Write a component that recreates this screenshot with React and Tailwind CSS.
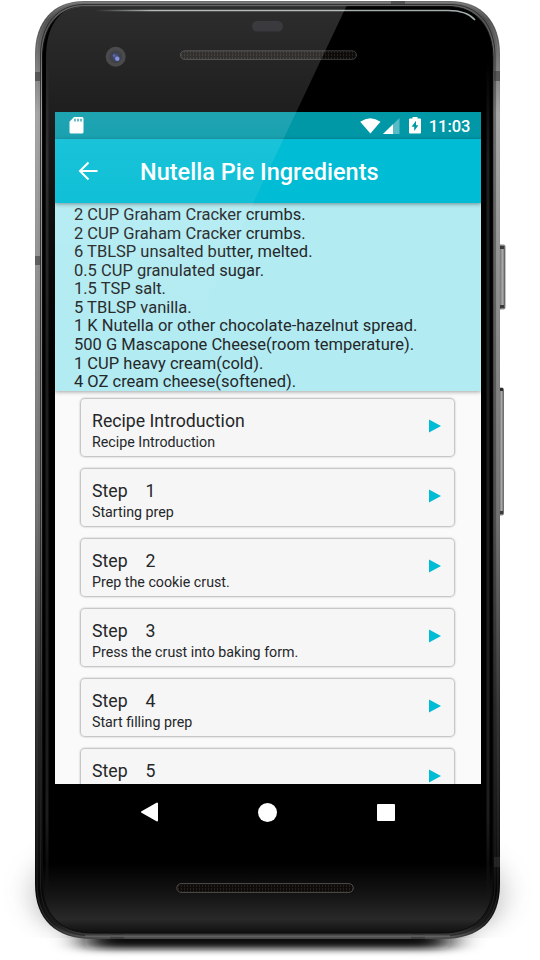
import React from "react";

const ingredients = [
  "2 CUP Graham Cracker crumbs.",
  "2 CUP Graham Cracker crumbs.",
  "6 TBLSP unsalted butter, melted.",
  "0.5 CUP granulated sugar.",
  "1.5 TSP salt.",
  "5 TBLSP vanilla.",
  "1 K Nutella or other chocolate-hazelnut spread.",
  "500 G Mascapone Cheese(room temperature).",
  "1 CUP heavy cream(cold).",
  "4 OZ cream cheese(softened).",
];

const steps = [
  { title: "Recipe Introduction", text: "Recipe Introduction" },
  { title: "Step", number: 1, text: "Starting prep" },
  { title: "Step", number: 2, text: "Prep the cookie crust." },
  { title: "Step", number: 3, text: "Press the crust into baking form." },
  { title: "Step", number: 4, text: "Start filling prep" },
  { title: "Step", number: 5 },
];

// Phone casing: metal rim, glass front, camera, grilles and side keys.
function DeviceBody() {
  return (
    <svg className="absolute inset-0" width="540" height="960" viewBox="0 0 540 960" fill="none">
      <defs>
        <linearGradient id="rim" x1="0" y1="0" x2="0" y2="1">
          <stop offset="0" stopColor="#6e6e6e" />
          <stop offset="0.02" stopColor="#505050" />
          <stop offset="0.06" stopColor="#707070" />
          <stop offset="0.12" stopColor="#a2a2a2" />
          <stop offset="0.3" stopColor="#8c8c8c" />
          <stop offset="0.55" stopColor="#6c6c6c" />
          <stop offset="0.75" stopColor="#2e2e2e" />
          <stop offset="0.88" stopColor="#151515" />
          <stop offset="0.95" stopColor="#050505" />
          <stop offset="0.985" stopColor="#1c1c1c" />
          <stop offset="1" stopColor="#4c4c4c" />
        </linearGradient>
        <linearGradient id="glass" x1="0" y1="0" x2="0" y2="1">
          <stop offset="0" stopColor="#000" />
          <stop offset="0.925" stopColor="#000" />
          <stop offset="0.96" stopColor="#151515" />
          <stop offset="0.985" stopColor="#292929" />
          <stop offset="1" stopColor="#101010" />
        </linearGradient>
        <linearGradient id="topline" x1="95" y1="0" x2="475" y2="0" gradientUnits="userSpaceOnUse">
          <stop offset="0" stopColor="#a5adad" stopOpacity="0" />
          <stop offset="0.15" stopColor="#a5adad" />
          <stop offset="1" stopColor="#a5adad" />
        </linearGradient>
        <linearGradient id="edge" x1="0" y1="60" x2="0" y2="900" gradientUnits="userSpaceOnUse">
          <stop offset="0" stopColor="#1d1d1d" stopOpacity="0" />
          <stop offset="0.12" stopColor="#1d1d1d" />
          <stop offset="0.9" stopColor="#1d1d1d" />
          <stop offset="1" stopColor="#1d1d1d" stopOpacity="0" />
        </linearGradient>
        <linearGradient id="key" x1="0" y1="0" x2="1" y2="0">
          <stop offset="0" stopColor="#555" />
          <stop offset="0.3" stopColor="#777" />
          <stop offset="0.65" stopColor="#aaa" />
          <stop offset="1" stopColor="#666" />
        </linearGradient>
        <linearGradient id="groundfade" x1="0" y1="790" x2="0" y2="955" gradientUnits="userSpaceOnUse">
          <stop offset="0" stopColor="#fff" stopOpacity="0" />
          <stop offset="0.8" stopColor="#fff" />
        </linearGradient>
        <mask id="ground"><rect x="0" y="780" width="540" height="180" fill="url(#groundfade)" /></mask>
        <filter id="soft" x="-20%" y="-60%" width="140%" height="220%"><feGaussianBlur stdDeviation="15 10" /></filter>
        <filter id="contact" x="-20%" y="-200%" width="140%" height="500%"><feGaussianBlur stdDeviation="16 3.5" /></filter>
        <pattern id="mesh" width="3" height="3" patternUnits="userSpaceOnUse">
          <rect width="3" height="3" fill="#0d0c0a" />
          <rect x="1" width="1" height="2" fill="#25221d" />
        </pattern>
        <radialGradient id="lens">
          <stop offset="0" stopColor="#34407a" />
          <stop offset="0.6" stopColor="#1c2036" />
          <stop offset="1" stopColor="#202024" />
        </radialGradient>
      </defs>

      <g mask="url(#ground)">
        <rect x="35" y="850" width="466" height="80" rx="40" fill="#555" opacity="0.5" filter="url(#soft)" />
      </g>
      <rect x="85" y="930" width="365" height="19" rx="6" fill="#0a0a0a" filter="url(#contact)" />

      <rect x="498" y="245" width="7" height="64" rx="1.5" fill="url(#key)" stroke="#555" strokeWidth="0.7" />
      <rect x="500" y="246" width="4" height="3" fill="#3a3a3a" />
      <rect x="500" y="305" width="4" height="3" fill="#3a3a3a" />
      <rect x="498" y="388" width="5.5" height="127" rx="1.5" fill="url(#key)" stroke="#555" strokeWidth="0.7" />
      <rect x="499" y="388" width="4" height="3" fill="#2c2c2c" />
      <rect x="499" y="511" width="4" height="3" fill="#3a3a3a" />

      <path d="M84 1H450C482 1 500 22 500 54V884C500 921 479 939 443 939H92C56 939 35 920 35 884V54C35 22 53 1 84 1Z" fill="url(#rim)" />
      <path d="M84 2.5H450C481 2.5 498 23 498 54V884C498 920 478 937 443 937H92C57 937 37 919 37 884V54C37 23 54 2.5 84 2.5Z" stroke="#fff" strokeOpacity="0.1" />
      <path d="M84 4.5H450C478 4.5 495 25 495 56V884C495 917 476 935.5 443 935.5H92C59 935.5 40.500 916 40.500 884V56C40.500 25 57 4.500 84 4.500Z" stroke="#222" strokeOpacity="0.8" />

      <g fill="#333" fillOpacity="0.55">
        <rect x="35" y="72" width="6" height="9" />
        <rect x="35" y="256" width="6" height="9" />
        <rect x="494" y="71" width="6" height="10" />
        <rect x="494" y="857" width="6" height="10" />
        <rect x="391" y="1" width="14" height="4" />
        <rect x="110" y="933" width="14" height="6" />
        <rect x="411" y="933" width="14" height="6" />
      </g>
      <path d="M85 936H450" stroke="#777" />

      <path d="M86 6.500H448C476 6.500 493 27 493 58V882C493 914 475 933 443 933H92C60 933 42.500 914 42.500 882V58C42.500 27 58 6.500 86 6.500Z" fill="url(#glass)" stroke="#0c0c0c" />
      <rect x="45.500" y="60" width="3" height="840" fill="url(#edge)" />
      <rect x="486.500" y="60" width="3" height="840" fill="url(#edge)" />
      <path d="M95 10.500H448C461 10.500 470 14 475 20" stroke="url(#topline)" strokeWidth="1.600" />

      <rect x="252" y="21" width="31" height="10.500" rx="5.250" fill="#131318" />
      <circle cx="115.700" cy="56.700" r="10" fill="#2c2b2c" />
      <circle cx="115.700" cy="56.700" r="6.500" fill="url(#lens)" />
      <circle cx="117.300" cy="58.700" r="2.200" fill="#6d7fe0" />
      <circle cx="114" cy="55.500" r="1.300" fill="#3e4da2" />
      <rect x="180.500" y="50.800" width="176" height="8.600" rx="4.300" fill="url(#mesh)" stroke="#3c3b39" />
      <rect x="176.800" y="883.600" width="176.500" height="8.800" rx="4.400" fill="url(#mesh)" stroke="#504d49" />
    </svg>
  );
}

// Diagonal light reflection across the upper-left part of the glass.
function Glare() {
  return (
    <svg className="pointer-events-none absolute inset-0 z-20" width="540" height="960" viewBox="0 0 540 960">
      <defs>
        <linearGradient id="glare" x1="0" y1="0" x2="0" y2="370" gradientUnits="userSpaceOnUse">
          <stop offset="0" stopColor="#fff" stopOpacity="0.18" />
          <stop offset="0.3" stopColor="#fff" stopOpacity="0.12" />
          <stop offset="0.55" stopColor="#fff" stopOpacity="0.06" />
          <stop offset="1" stopColor="#fff" stopOpacity="0" />
        </linearGradient>
      </defs>
      <path d="M86 6H346.500L174 370H46V58C46 27 58 6 86 6Z" fill="url(#glare)" />
    </svg>
  );
}

function StatusBar() {
  return (
    <div className="flex h-[27px] shrink-0 items-center bg-[#0097a7] pr-[10px] pl-[14px] text-white">
      <svg width="15" height="17" viewBox="0 0 15 17">
        <path d="M5 0H13Q14.500 0 14.500 1.500V15Q14.500 16.500 13 16.500H2Q.500 16.500 .500 15V4.700Z" fill="#fff" />
        <path d="M6 1.700V4.500M9 1.700V4.500M12 1.700V4.500" stroke="#1f9faf" strokeWidth="1.500" />
      </svg>
      <svg className="ml-auto" width="21" height="16" viewBox="0 0 21 16">
        <path d="M.200 3.800Q10.300-3.500 20.500 3.800L10.400 15.500Z" fill="#fff" />
      </svg>
      <svg className="ml-[2px]" width="17" height="16" viewBox="0 0 17 16">
        <path d="M0 16L16.500 0V16Z" fill="#fff" fillOpacity="0.35" />
        <path d="M0 16L10 6.300V16Z" fill="#fff" />
      </svg>
      <svg className="ml-[9px]" width="12" height="17" viewBox="0 0 12 17">
        <path d="M3.500 0H8.500V1.500H11Q12 1.500 12 2.500V15.500Q12 16.500 11 16.500H1Q0 16.500 0 15.500V2.500Q0 1.500 1 1.500H3.500Z" fill="#fff" />
        <path d="M7 3.800L2.600 9.700H5.200V14L9.400 8.200H7Z" fill="#0097a7" />
      </svg>
      <span className="ml-[8px] pt-[2px] text-[16.500px] leading-[20px] font-medium">11:03</span>
    </div>
  );
}

function StepCard({ title, number, text }) {
  return (
    <div className="flex h-[57px] shrink-0 justify-between rounded-[4px] bg-[#f6f6f6] pt-[12px] pr-[13px] pl-[11px] shadow-[0_0_2px_1px_rgba(0,0,0,0.28)]">
      <div>
        <div className="flex gap-[18px] text-[17.700px] leading-[21px]">
          <span>{title}</span>
          {number && <span>{number}</span>}
        </div>
        {text && <div className="text-[14.250px] leading-[20px]">{text}</div>}
      </div>
      <svg className="mt-[8px]" width="12" height="14" viewBox="0 0 12 14">
        <path d="M0 .500L12 7L0 13.500Z" fill="#00bcd4" />
      </svg>
    </div>
  );
}

export default function App() {
  return (
    <div className="relative h-[960px] w-[540px] overflow-hidden bg-white font-['Roboto',sans-serif] text-[#252729]">
      <DeviceBody />
      <main className="relative pt-[112px] pl-[55px]">
        <div className="flex h-[672px] w-[425.500px] flex-col overflow-hidden bg-[#fafafa]">
          <StatusBar />
          <header className="relative z-10 flex h-[64px] shrink-0 items-center bg-[#00bcd4] pl-[23px] text-white shadow-[0_1px_4px_rgba(0,0,0,0.4)]">
            <svg width="20" height="20" viewBox="0 0 20 20" fill="none" stroke="#fff" strokeWidth="2">
              <path d="M19.500 10H2.500M10.500 1.500L2 10L10.500 18.500" />
            </svg>
            <h1 className="ml-[42px] pt-[2px] text-[23.500px] leading-[28px] font-medium">Nutella Pie Ingredients</h1>
          </header>
          <section className="relative h-[188px] shrink-0 bg-[#b2ebf2] pt-[3px] pl-[19px] shadow-[0_1px_4px_rgba(0,0,0,0.35)]">
            {ingredients.map((item, i) => (
              <div key={i} className="text-[16.500px] leading-[18.560px]">{item}</div>
            ))}
          </section>
          <section className="flex flex-col gap-[13.100px] pt-[8px] pr-[27px] pl-[26px]">
            {steps.map((step, i) => (
              <StepCard key={i} {...step} />
            ))}
          </section>
        </div>
        <nav className="flex h-[56px] w-[425px] items-center pl-[85px]">
          <svg width="19" height="20" viewBox="0 0 19 20">
            <path d="M17 1.500V18.500L2 10Z" fill="#fff" stroke="#fff" strokeWidth="2" strokeLinejoin="round" />
          </svg>
          <div className="ml-[99px] size-[19px] rounded-full bg-white" />
          <div className="ml-[100px] h-[17px] w-[18px] rounded-[1px] bg-white" />
        </nav>
      </main>
      <Glare />
    </div>
  );
}
